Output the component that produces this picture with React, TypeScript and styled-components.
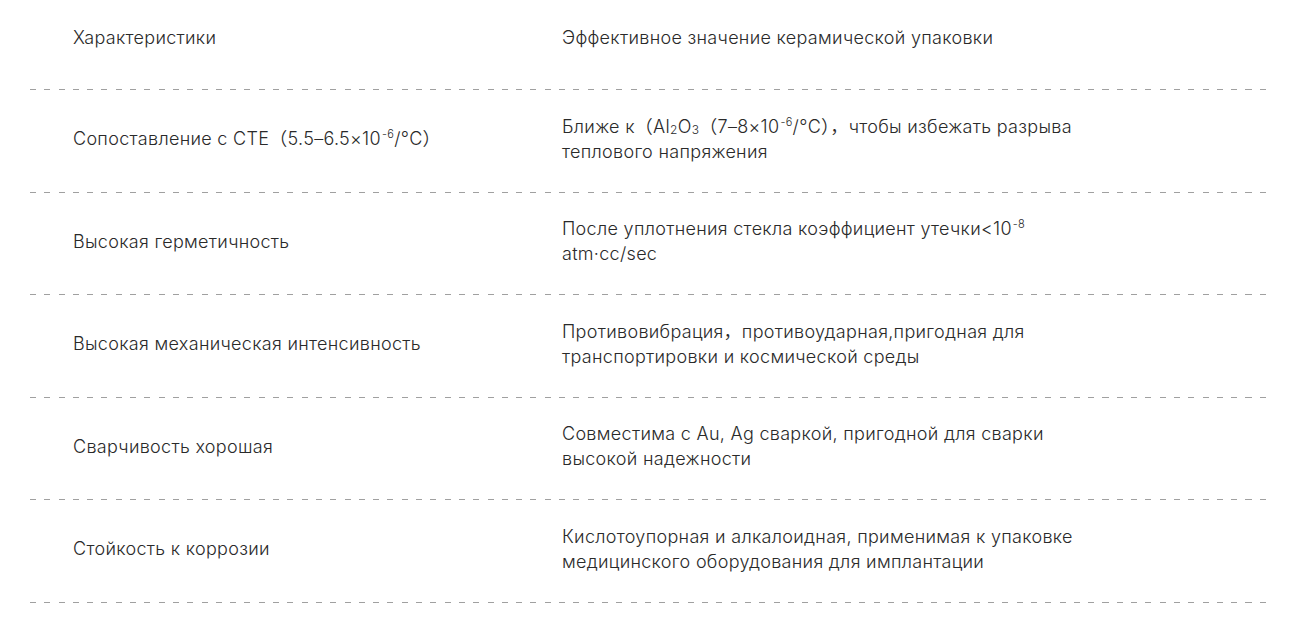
import React from 'react';
import styled, {createGlobalStyle} from "styled-components";

const GlobalStyle = createGlobalStyle`
  html, body {
    margin: 0;
    padding: 0;
    background: #fff;
  }
  body {
    font-family: Inter, "Noto Sans CJK SC", sans-serif;
    color: #2a2a2a;
  }
`

const Table = styled.section`
  width: 1238px;
  margin-left: 30px;
`

const Line = styled.div`
  display: grid;
  grid-template-columns: 489px 1fr;
  align-items: center;
  padding-left: 43px;
  background-image: repeating-linear-gradient(to right, #a0a0a0 0 6px, transparent 6px 14.3px);
  background-size: 100% 1px;
  background-position: left bottom;
  background-repeat: no-repeat;
  font-size: 18px;
  font-weight: 350;
  line-height: 25px;
  letter-spacing: 0.3px;
`

const Head = styled(Line)`
  padding-top: 25px;
  padding-bottom: 40px;
`

const BodyRow = styled(Line)`
  padding-top: 23.5px;
  padding-bottom: 29px;
`

const Cell = styled.div`
  white-space: nowrap;
`

const Sup = styled.sup`
  font-size: 11px;
  line-height: 0;
  vertical-align: 7px;
  margin-left: 1px;
`

const Sub = styled.sub`
  font-size: 12px;
  line-height: 0;
  vertical-align: -1px;
`

type Row = {
    name: React.ReactNode
    value: React.ReactNode
}

const rows: Row[] = [
    {
        name: <>Сопоставление с CTE（5.5–6.5×10<Sup>-6</Sup>/°C）</>,
        value: <>Ближе к（Al<Sub>2</Sub>O<Sub>3</Sub>（7–8×10<Sup>-6</Sup>/°C），чтобы избежать разрыва<br/>теплового напряжения</>
    },
    {
        name: 'Высокая герметичность',
        value: <>После уплотнения стекла коэффициент утечки&lt;10<Sup>-8</Sup><br/>atm·cc/sec</>
    },
    {
        name: 'Высокая механическая интенсивность',
        value: <>Противовибрация，противоударная,пригодная для<br/>транспортировки и космической среды</>
    },
    {
        name: 'Сварчивость хорошая',
        value: <>Совместима с Au, Ag сваркой, пригодной для сварки<br/>высокой надежности</>
    },
    {
        name: 'Стойкость к коррозии',
        value: <>Кислотоупорная и алкалоидная, применимая к упаковке<br/>медицинского оборудования для имплантации</>
    },
]

export default function App() {
    return (
        <>
            <GlobalStyle/>
            <Table>
                <Head>
                    <Cell>Характеристики</Cell>
                    <Cell>Эффективное значение керамической упаковки</Cell>
                </Head>
                {rows.map((r, i) => (
                    <BodyRow key={i}>
                        <Cell>{r.name}</Cell>
                        <Cell>{r.value}</Cell>
                    </BodyRow>
                ))}
            </Table>
        </>
    );
}
